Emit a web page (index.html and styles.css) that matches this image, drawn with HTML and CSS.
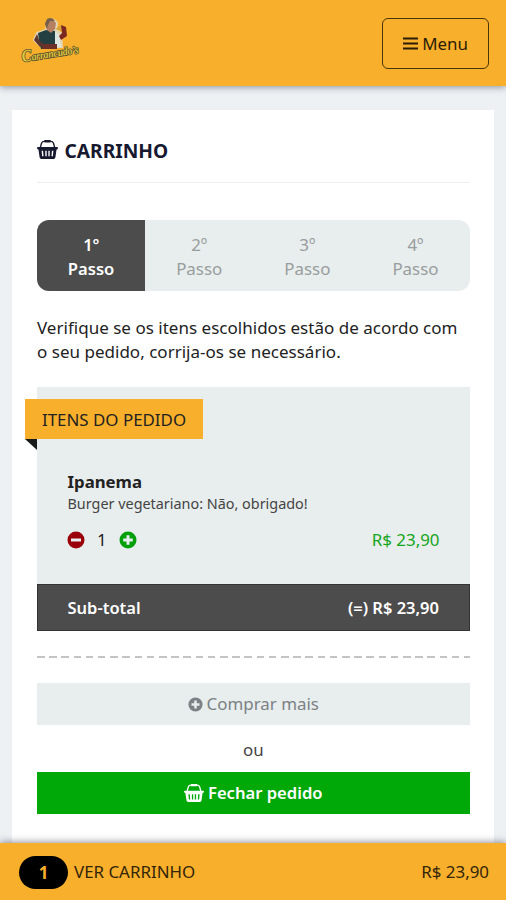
FILE: index.html
```html
<!DOCTYPE html>
<html lang="pt-BR">
<head>
<meta charset="utf-8">
<title>Carrinho</title>
<link rel="stylesheet" href="styles.css">
</head>
<body>
<svg class="defs" width="0" height="0">
  <symbol id="basket" viewBox="0 0 20 20">
    <path d="M3.2 8 4.3 4Q4.9 2.2 7 2.2M16.8 8 15.7 4Q15.1 2.2 13 2.2" fill="none" stroke="currentColor" stroke-width="1.3"/>
    <rect x="6.7" y="1" width="6.6" height="2.3" rx=".9" fill="currentColor"/>
    <path d="M.9 7.7H19.1Q20 7.7 20 8.6T19.1 9.9H18.6L17.5 17.6Q17.2 19 16 19H4Q2.8 19 2.5 17.6L1.4 9.9H.9Q0 9.5 0 8.6T.9 7.7ZM4.4 11.2 4.9 16.4H6.2L5.8 11.2ZM7.9 11.2V16.4H9.2V11.2ZM10.8 11.2V16.4H12.1V11.2ZM14.2 11.2 13.8 16.4H15.1L15.6 11.2Z" fill="currentColor" fill-rule="evenodd"/>
  </symbol>
  <symbol id="plus" viewBox="0 0 18 18">
    <path d="M9 .5A8.5 8.5 0 1 0 9 17.5 8.5 8.5 0 0 0 9 .5ZM7.5 4.2H10.5V7.5H13.8V10.5H10.5V13.8H7.5V10.5H4.2V7.5H7.5Z" fill="currentColor" fill-rule="evenodd"/>
  </symbol>
  <symbol id="minus" viewBox="0 0 18 18">
    <path d="M9 .5A8.5 8.5 0 1 0 9 17.5 8.5 8.5 0 0 0 9 .5ZM4 7.4H14V10.6H4Z" fill="currentColor" fill-rule="evenodd"/>
  </symbol>
</svg>

<header class="topbar">
  <svg class="logo" viewBox="0 0 64 52" width="64" height="52">
    <path d="M29 4Q35 2 38 7L37 14 42 17 43 31H23L18 27 15 24 18 17 27 14Z" fill="#e4d6b4" stroke="#e4d6b4" stroke-width="2"/>
    <path d="M19 17 27 14 36 15 38 33H22L20 25Z" fill="#243f42"/>
    <path d="M18 18 15 24 21 31 25 29 20 24Z" fill="#5b3530"/>
    <path d="M36 15 40 19 42 31H36Z" fill="#dce5df"/>
    <path d="M26 7 28 4 33 3 37 7 36 13 32 17 28 14Z" fill="#b57f62"/>
    <path d="M26 8 28 3Q33 0 36 5L31 5 29 9 28 13Z" fill="#77604b"/>
    <path d="M36 13 41 10 46 12 44 15Z" fill="#d4a33c"/>
    <path d="M42 9 47 11 48 20 42 24 40 20 43 17Z" fill="#7b2920"/>
    <path d="M23 28H38V33H23Z" fill="#6c3028"/>
    <text class="logo-text" x="3.5" y="46" textLength="57" lengthAdjust="spacingAndGlyphs" transform="rotate(-9 3.5 46)"><tspan class="logo-cap">C</tspan>arrancudo’s</text>
  </svg>
  <button class="menu">
    <svg width="15" height="13" viewBox="0 0 15 13"><path d="M0 1.5H15M0 6.5H15M0 11.5H15" stroke="currentColor" stroke-width="2"/></svg>
    <span>Menu</span>
  </button>
</header>

<main class="card">
  <h1 class="title"><svg width="21" height="21"><use href="#basket"/></svg><span>CARRINHO</span></h1>
  <ol class="steps">
    <li class="step active">1º<br>Passo</li>
    <li class="step">2º<br>Passo</li>
    <li class="step">3º<br>Passo</li>
    <li class="step">4º<br>Passo</li>
  </ol>
  <p class="intro">Verifique se os itens escolhidos estão de acordo com o seu pedido, corrija-os se necessário.</p>
  <section class="order">
    <h2 class="ribbon">ITENS DO PEDIDO</h2>
    <div class="item">
      <h3 class="name">Ipanema</h3>
      <p class="note">Burger vegetariano: Não, obrigado!</p>
      <div class="line">
        <div class="qty">
          <svg class="less" width="18" height="18"><use href="#minus"/></svg>
          <span>1</span>
          <svg class="more" width="18" height="18"><use href="#plus"/></svg>
        </div>
        <span class="price">R$ 23,90</span>
      </div>
    </div>
    <div class="subtotal"><span>Sub-total</span><span>(=) R$ 23,90</span></div>
  </section>
  <div class="dashes"></div>
  <button class="btn buy"><svg width="15" height="15"><use href="#plus"/></svg><span>Comprar mais</span></button>
  <p class="or">ou</p>
  <button class="btn close"><svg width="20" height="20"><use href="#basket"/></svg><span>Fechar pedido</span></button>
</main>

<footer class="cartbar">
  <span class="count">1</span>
  <span>VER CARRINHO</span>
  <span class="total">R$ 23,90</span>
</footer>
</body>
</html>
```
FILE: styles.css
```css
* { box-sizing: border-box; margin: 0; padding: 0; }
body {
  height: 900px;
  overflow: hidden;
  display: flex;
  flex-direction: column;
  background: #edf1f4;
  font: 16.9px/23.5px "Noto Sans", "Open Sans", sans-serif;
  color: #222;
}
button { font: inherit; border: 0; }
svg { display: block; flex: none; }
.defs { display: none; }

.topbar {
  height: 86px;
  flex: none;
  display: flex;
  justify-content: space-between;
  align-items: flex-start;
  padding: 18px 17px 0 19px;
  background: #f8af2b;
  box-shadow: 0 1px 7px rgba(40, 50, 65, .5);
}
.logo { margin-top: -2px; overflow: visible; }
.logo-text {
  font: italic bold 11px "Liberation Serif", serif;
  fill: #e0c83c;
  stroke: #57502f;
  stroke-width: 1.6px;
  paint-order: stroke;
}
.logo-cap { font-size: 17px; }
.menu {
  width: 107px;
  height: 51px;
  display: flex;
  align-items: center;
  justify-content: center;
  gap: 4px;
  background: none;
  border: 1.5px solid #4a360e;
  border-radius: 6px;
  color: #2a1e08;
}

.card {
  flex: 1;
  margin: 24px 12px 0;
  padding: 0 24.5px 0 25px;
  background: #fff;
}
.title {
  height: 73px;
  display: flex;
  align-items: center;
  gap: 6.5px;
  padding-top: 9px;
  border-bottom: 1px solid #eee;
  font-size: 19.2px;
  font-weight: 700;
  color: #16192f;
}
.title svg { margin-top: -3px; }
.steps {
  height: 71px;
  margin-top: 37px;
  display: grid;
  grid-template-columns: repeat(4, 1fr);
  overflow: hidden;
  list-style: none;
  background: #e8eded;
  border-radius: 12px;
}
.step {
  padding-top: 13px;
  text-align: center;
  color: #999d9d;
}
.step.active { background: #4c4c4c; color: #fff; font-size: 16.6px; font-weight: 600; }
.intro { margin-top: 25px; font-size: 17px; letter-spacing: .015px; }
.order { margin-top: 24px; background: #e8eded; height: 244px; display: flex; flex-direction: column; }
.ribbon {
  position: relative;
  width: 178px;
  height: 40px;
  margin: 12px 0 0 -12px;
  padding-left: 17px;
  line-height: 41px;
  background: #f8af2b;
  font-size: 16.9px;
  font-weight: 400;
}
.ribbon::after {
  content: "";
  position: absolute;
  left: 0;
  top: 100%;
  border-top: 11px solid #171b19;
  border-left: 12px solid transparent;
}
.item { flex: 1; padding: 31px 30px 0; }
.name { font-size: 16.8px; line-height: 23px; font-weight: 700; }
.name, .note { padding-left: .5px; }
.note { font-size: 14.4px; line-height: 21px; color: #444; }
.line { margin-top: 14px; display: flex; justify-content: space-between; align-items: center; }
.qty { display: flex; align-items: center; gap: 12px; }
.less { color: #99000a; }
.more { color: #04a00c; }
.price { color: #15a51b; }
.subtotal {
  height: 47px;
  display: flex;
  align-items: center;
  justify-content: space-between;
  padding: 0 29.5px;
  background: #4c4c4c;
  border: 1px solid #333;
  color: #fff;
  font-size: 16.5px;
  font-weight: 600;
}
.dashes {
  height: 2px;
  margin: 25px 0;
  background: repeating-linear-gradient(90deg, #c4c4c4 0 7.5px, transparent 7.5px 12.2px);
}
.btn {
  width: 100%;
  height: 42px;
  display: flex;
  align-items: center;
  justify-content: center;
  gap: 4px;
}
.buy { background: #e8eded; color: #7b8184; }
.or { height: 47px; line-height: 49px; text-align: center; color: #444; }
.close { background: #00a808; color: #fff; font-size: 16.6px; font-weight: 600; }

.cartbar {
  position: relative;
  height: 57px;
  flex: none;
  display: flex;
  align-items: center;
  gap: 6px;
  padding: 1px 17px 0 19px;
  background: #f8af2b;
  box-shadow: 0 -1px 7px rgba(40, 40, 60, .5);
  color: #33250a;
}
.count {
  width: 49px;
  height: 33px;
  border-radius: 17px;
  background: #000;
  color: #f8af2b;
  font-weight: 700;
  line-height: 33px;
  text-align: center;
}
.total { margin-left: auto; }
```
